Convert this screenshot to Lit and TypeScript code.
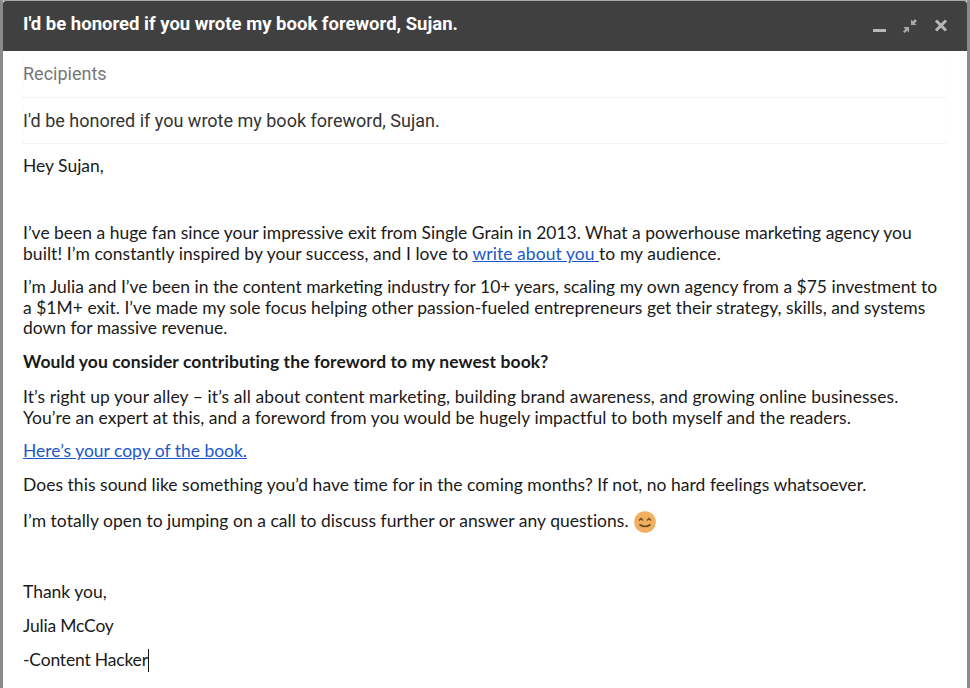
import { LitElement, html, css } from "lit";
import { customElement } from "lit/decorators.js";

@customElement("app-root")
export class AppRoot extends LitElement {
  static styles = css`
    :host { display: block; width: 970px; height: 688px; overflow: hidden; background: #fff; font-family: "Lato", "Liberation Sans", sans-serif; }
    .win { box-sizing: border-box; width: 970px; height: 688px; border-left: 3px solid #8a8a8a; border-top: 1px solid #a8a8a8; border-right: 3px solid #8a8a8a; overflow: hidden; background: #fff; }
    .head { height: 50px; background: #404040; border-radius: 3px 3px 0 0; display: flex; align-items: center; padding: 0 17px 0 20px; color: #fff; font: 700 18.5px/22px "Roboto", sans-serif; }
    .head .t { flex: 1; margin-top: -4px; }
    .icons { display: flex; align-items: center; gap: 13px; margin-top: -1px; }
    .icons svg { display: block; }
    .main { padding: 0 21px 0 20px; }
    .fields {
      background-image: repeating-linear-gradient(to bottom, #eef3f3 0 1px, transparent 1px 6px), repeating-linear-gradient(to bottom, #eef3f3 0 1px, transparent 1px 6px);
      background-size: 1px 100%, 1px 100%;
      background-position: left top, right top;
      background-repeat: no-repeat;
    }
    .field { height: 46px; box-sizing: border-box; border-bottom: 1px dotted #dfe9e9; display: flex; align-items: center; font: 400 18px/22px "Roboto", sans-serif; color: #333; }
    .field.r { color: #777; height: 47px; padding-bottom: 1px; }
    .body { color: #1a1a1a; font-size: 17.48px; line-height: 20.5px; padding-top: 12px; }
    p { margin: 0 0 13px; white-space: nowrap; }
    p.m15 { margin-bottom: 15px; }
    p.m16 { margin-bottom: 16px; }
    p.tight { margin-bottom: 12.5px; }
    a { color: #2158c9; text-decoration: underline; }
    .sp { height: 33.5px; }
    .sp.b { height: 36px; }
    .l-a { letter-spacing: 0.07px; }
    .l-b { letter-spacing: 0.025px; }
    .l-c { letter-spacing: 0.09px; }
    .l-d { letter-spacing: 0.085px; }
    .l-e { letter-spacing: 0.055px; }
    .l-f { letter-spacing: 0.045px; }
    .l-g { letter-spacing: 0.035px; }
    .l-h { letter-spacing: -0.17px; }
    .emoji { display: inline-block; vertical-align: -6px; margin-left: 1px; }
    .caret { display: inline-block; width: 1px; height: 23px; background: #111; vertical-align: -6px; }
  `;
  render() {
    return html`<div class="win">
      <div class="head"><div class="t">I'd be honored if you wrote my book foreword, Sujan.</div>
        <div class="icons">
          <svg width="18" height="18" viewBox="0 0 18 18"><rect x="3" y="12" width="13" height="3" fill="#b8b8b8"/></svg>
          <svg width="18" height="18" viewBox="0 0 18 18" fill="#a8a8a8"><path d="M10 8V2.500l1.800 1.800L14 2l2 2-2.300 2.200L15.500 8z"/><path d="M8 10v5.500l-1.800-1.800L3.500 16l-1.500-1.500 2.300-2.300L2.500 10z"/></svg>
          <svg width="18" height="18" viewBox="0 0 18 18"><path d="M4 3.500l10 10M14 3.500l-10 10" stroke="#b8b8b8" stroke-width="3"/></svg>
        </div>
      </div>
      <div class="main">
        <div class="fields">
          <div class="field r">Recipients</div>
          <div class="field">I'd be honored if you wrote my book foreword, Sujan.</div>
        </div>
        <div class="body">
          <p>Hey Sujan,</p>
          <div class="sp"></div>
          <p>I’ve been a huge fan since your impressive exit from Single Grain in 2013. What a powerhouse marketing agency you<br><span class="l-a">built! I’m constantly inspired by your success, and I love to <a>write about you </a>to my audience.</span></p>
          <p>I’m Julia and I’ve been in the content marketing industry for 10+ years, scaling my own agency from a $75 investment to<br><span class="l-b">a $1M+ exit. I’ve made my sole focus helping other passion-fueled entrepreneurs get their strategy, skills, and systems</span><br>down for massive revenue.</p>
          <p class="m15"><b class="l-c">Would you consider contributing the foreword to my newest book?</b></p>
          <p><span class="l-d">It’s right up your alley – it’s all about content marketing, building brand awareness, and growing online businesses.</span><br><span class="l-e">You’re an expert at this, and a foreword from you would be hugely impactful to both myself and the readers.</span></p>
          <p><a>Here’s your copy of the book.</a></p>
          <p class="m16"><span class="l-f">Does this sound like something you’d have time for in the coming months? If not, no hard feelings whatsoever.</span></p>
          <p><span class="l-g">I’m totally open to jumping on a call to discuss further or answer any questions.</span> <svg class="emoji" width="22" height="22" viewBox="0 0 22 22"><circle cx="11" cy="11" r="10.800" fill="#f0b060"/><path d="M5 9.500l2-2 2 2M13 9.500l2-2 2 2" fill="none" stroke="#6a4a28" stroke-width="1.400"/><path d="M5.500 13.500q5.500 4 11 0" fill="none" stroke="#6a4a28" stroke-width="1.600"/></svg></p>
          <div class="sp b"></div>
          <p>Thank you,</p>
          <p class="tight"><span class="l-h">Julia McCoy</span></p>
          <p><span class="l-h">-Content Hacker</span><span class="caret"></span></p>
        </div>
      </div>
    </div>`;
  }
}
